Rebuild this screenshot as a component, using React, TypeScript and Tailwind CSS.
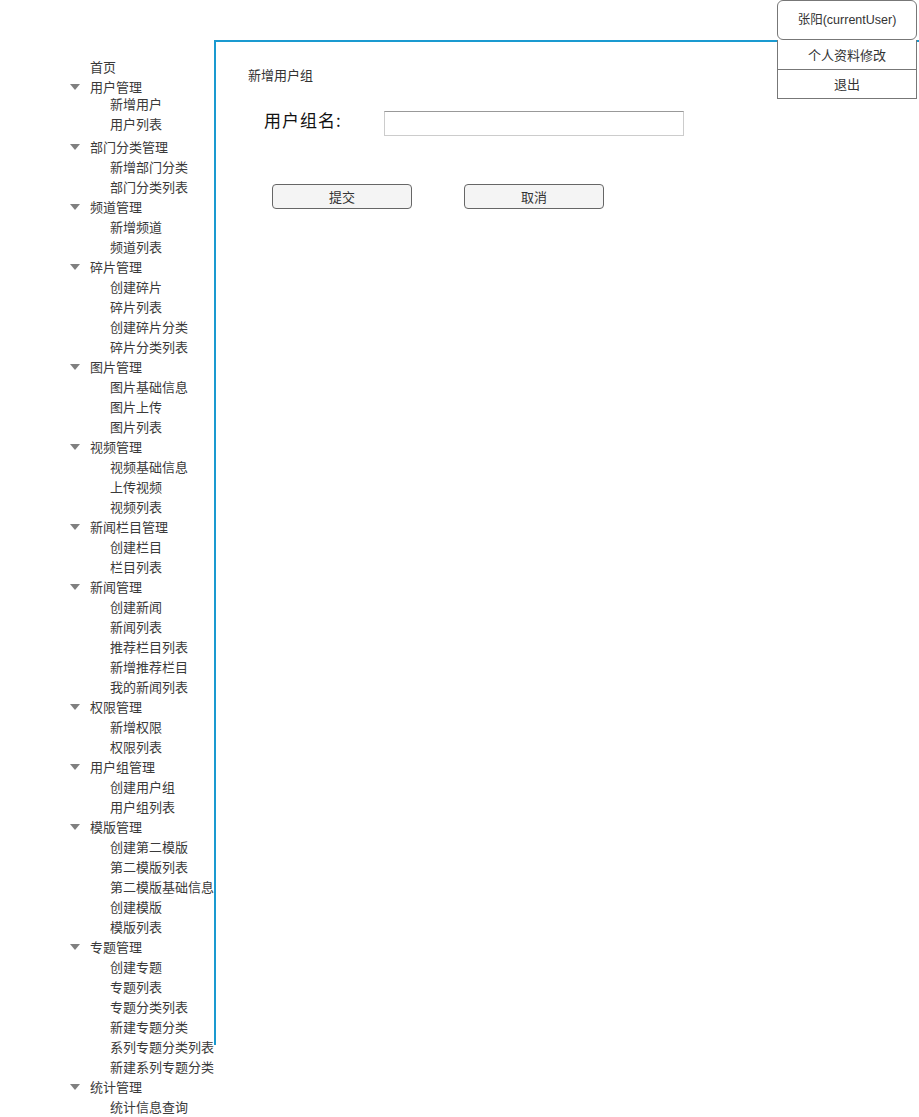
import { ReactNode } from 'react'

interface MenuGroup {
  title: string
  items: string[]
  tight?: boolean
}

const menu: MenuGroup[] = [
  { title: '用户管理', items: ['新增用户', '用户列表'], tight: true },
  { title: '部门分类管理', items: ['新增部门分类', '部门分类列表'] },
  { title: '频道管理', items: ['新增频道', '频道列表'] },
  { title: '碎片管理', items: ['创建碎片', '碎片列表', '创建碎片分类', '碎片分类列表'] },
  { title: '图片管理', items: ['图片基础信息', '图片上传', '图片列表'] },
  { title: '视频管理', items: ['视频基础信息', '上传视频', '视频列表'] },
  { title: '新闻栏目管理', items: ['创建栏目', '栏目列表'] },
  { title: '新闻管理', items: ['创建新闻', '新闻列表', '推荐栏目列表', '新增推荐栏目', '我的新闻列表'] },
  { title: '权限管理', items: ['新增权限', '权限列表'] },
  { title: '用户组管理', items: ['创建用户组', '用户组列表'] },
  { title: '模版管理', items: ['创建第二模版', '第二模版列表', '第二模版基础信息', '创建模版', '模版列表'] },
  { title: '专题管理', items: ['创建专题', '专题列表', '专题分类列表', '新建专题分类', '系列专题分类列表', '新建系列专题分类'] },
  { title: '统计管理', items: ['统计信息查询'] },
]

function Row({ children, className = '' }: { children: ReactNode; className?: string }) {
  return <div className={`h-5 leading-5 whitespace-nowrap ${className}`}>{children}</div>
}

function Caret() {
  return (
    <svg width="10" height="6" viewBox="0 0 10 6" className="absolute left-0 top-[7px]">
      <polygon points="0,0 10,0 5,6" fill="#808080" />
    </svg>
  )
}

function Sidebar() {
  return (
    <div className="w-[214px] shrink-0 pt-[57px] pl-[70px] text-[13px] text-[#3a3a3a]">
      <Row className="pl-5">首页</Row>
      {menu.map((group) => (
        <div key={group.title}>
          <Row className="relative pl-5">
            <Caret />
            {group.title}
          </Row>
          <div className={group.tight ? '-mt-[3px] mb-[3px]' : ''}>
            {group.items.map((item) => (
              <Row key={item} className="pl-10">
                {item}
              </Row>
            ))}
          </div>
        </div>
      ))}
    </div>
  )
}

function UserMenu() {
  return (
    <div className="absolute right-[2px] top-0 w-[140px] text-[13px] text-[#333] bg-white">
      <div
        className="h-[40px] flex items-center justify-center border border-[#777] rounded-md bg-white text-[12.5px]"
        style={{ fontFamily: '"Liberation Sans", "Noto Sans CJK SC", sans-serif' }}
      >
        张阳(currentUser)
      </div>
      <div className="h-[30px] flex items-center justify-center border-x border-b border-[#777]">
        个人资料修改
      </div>
      <div className="h-[29px] flex items-center justify-center border-x border-b border-[#777]">
        退出
      </div>
    </div>
  )
}

export default function App() {
  return (
    <div
      className="relative w-[919px] h-[1117px] bg-white overflow-hidden"
      style={{ fontFamily: '"Noto Sans CJK SC", "Noto Sans", sans-serif' }}
    >
      <div className="flex items-start">
        <Sidebar />
        <div className="mt-[40px] flex-1 h-[1005px] border-l-2 border-t-2 border-[#1a9ad0]">
          <div className="pl-[32px] pt-[23px] text-[13px] leading-5 text-[#333]">新增用户组</div>
          <div className="flex items-start mt-[26px] pl-[48px]">
            <label className="w-[120px] text-[17px] leading-[18px] font-normal tracking-[1px] text-[#111]">用户组名:</label>
            <input
              type="text"
              className="w-[300px] h-[25px] border border-[#ccc] border-t-[#999] outline-none px-1 text-[13px]"
            />
          </div>
          <div className="flex gap-[52px] mt-[48px] pl-[56px]">
            <button className="w-[140px] h-[25px] rounded border border-[#666] bg-[#f4f4f4] text-[13px] text-[#333]">
              提交
            </button>
            <button className="w-[140px] h-[25px] rounded border border-[#666] bg-[#f4f4f4] text-[13px] text-[#333]">
              取消
            </button>
          </div>
        </div>
      </div>
      <UserMenu />
    </div>
  )
}
